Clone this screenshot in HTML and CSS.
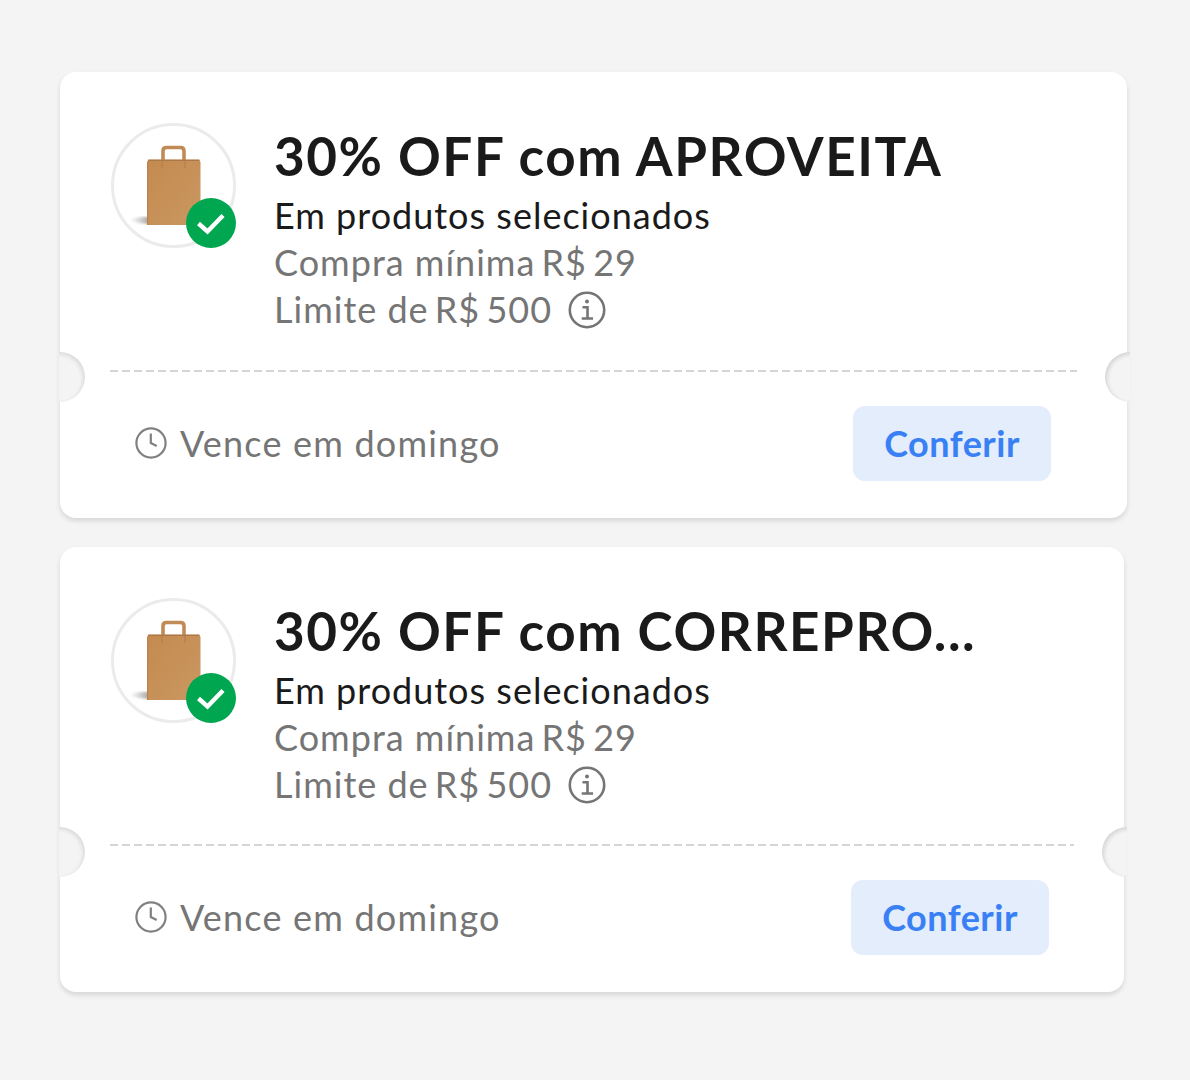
FILE: index.html
```
<!DOCTYPE html>
<html lang="pt-BR">
<head>
  <meta charset="UTF-8">
  <meta name="viewport" content="width=device-width, initial-scale=1.0">
  <title>Cupons</title>
  <link rel="stylesheet" href="styles.css">
</head>
<body>
  <svg class="sprite" aria-hidden="true">
    <defs>
      <linearGradient id="kraft" x1="0" y1="0" x2="1" y2="1">
        <stop offset="0" stop-color="#c48a50"/>
        <stop offset="1" stop-color="#c99861"/>
      </linearGradient>
      <linearGradient id="sombra" x1="0" y1="0" x2="1" y2="0">
        <stop offset="0" stop-color="#888" stop-opacity="0"/>
        <stop offset="1" stop-color="#665f57" stop-opacity="0.6"/>
      </linearGradient>
      <filter id="suave"><feGaussianBlur stdDeviation="1.2"/></filter>
    </defs>
    <symbol id="sacola" viewBox="0 0 119 119">
      <path d="M15 94 Q25 90 36 91 V98 Q24 98 15 94Z" fill="url(#sombra)" filter="url(#suave)"/>
      <path d="M49 43V25Q49 21.500 52.500 21.500H66.500Q70 21.500 70 25V43" fill="none" stroke="#c18b57" stroke-width="3.600"/>
      <path d="M33 36 34.500 33.500H85L86.500 36V99H33Z" fill="url(#kraft)"/>
      <path d="M34 34.300H85.500" stroke="#ab7947" stroke-width="1.200"/>
      <path d="M48 35V42M71 35V42" stroke="#bb834c" stroke-width="1.500"/>
      <path d="M33.600 37V99" stroke="#b9834f" stroke-width="1.200"/>
    </symbol>
    <symbol id="check" viewBox="0 0 50 50">
      <circle cx="25" cy="25" r="25" fill="#00a650"/>
      <path d="M12.500 25.500 21.500 33.500 37 17.500" fill="none" stroke="#fff" stroke-width="4.400"/>
    </symbol>
    <symbol id="info" viewBox="0 0 38 38">
      <circle cx="19" cy="19" r="17.200" fill="none" stroke="#757575" stroke-width="2.600"/>
      <circle cx="19" cy="10.500" r="2" fill="#757575"/>
      <path d="M14.500 16.300H19.500V27.200M13.700 27.500H25" fill="none" stroke="#757575" stroke-width="2.600"/>
    </symbol>
    <symbol id="relogio" viewBox="0 0 32 32">
      <circle cx="16" cy="16" r="14.600" fill="none" stroke="#808080" stroke-width="2.200"/>
      <path d="M15.800 6.500V16L21.700 19" fill="none" stroke="#808080" stroke-width="2.200"/>
    </symbol>
  </svg>

  <main class="cupons">
    <article class="cupom">
      <div class="topo">
        <div class="foto">
          <svg class="sacola"><use href="#sacola"/></svg>
          <svg class="check"><use href="#check"/></svg>
        </div>
        <div class="texto">
          <h2 class="titulo">30% OFF com APROVEITA</h2>
          <p class="sub">Em produtos selecionados</p>
          <p class="minimo">Compra mínima<span class="valor"> R$ 29</span></p>
          <p class="limite"><span>Limite de<span class="valor"> R$ 500</span></span><svg class="info"><use href="#info"/></svg></p>
        </div>
      </div>
      <div class="divisor"></div>
      <div class="rodape">
        <div class="prazo"><svg class="relogio"><use href="#relogio"/></svg><span>Vence em domingo</span></div>
        <button class="botao">Conferir</button>
      </div>
    </article>

    <article class="cupom cupom-longo">
      <div class="topo">
        <div class="foto">
          <svg class="sacola"><use href="#sacola"/></svg>
          <svg class="check"><use href="#check"/></svg>
        </div>
        <div class="texto">
          <h2 class="titulo">30% OFF com CORREPRO...</h2>
          <p class="sub">Em produtos selecionados</p>
          <p class="minimo">Compra mínima<span class="valor"> R$ 29</span></p>
          <p class="limite"><span>Limite de<span class="valor"> R$ 500</span></span><svg class="info"><use href="#info"/></svg></p>
        </div>
      </div>
      <div class="divisor"></div>
      <div class="rodape">
        <div class="prazo"><svg class="relogio"><use href="#relogio"/></svg><span>Vence em domingo</span></div>
        <button class="botao">Conferir</button>
      </div>
    </article>
  </main>
</body>
</html>
```
FILE: styles.css
```
* {
    box-sizing: border-box;
}
body {
    margin: 0;
    background-color: #f4f4f4;
    font-family: Lato, "Open Sans", sans-serif;
}
h2, p {
    margin: 0;
    white-space: nowrap;
}
.sprite {
    position: absolute;
    width: 0;
    height: 0;
}
.cupons {
    display: flex;
    flex-direction: column;
    gap: 29px;
    padding: 72px 60px;
}
.cupom {
    position: relative;
    width: 1067px;
    height: 446px;
    background-color: #fff;
    border-radius: 16px;
    box-shadow: 0 3px 5px rgba(0, 0, 0, 0.12);
}
.cupom-longo {
    width: 1064px;
    height: 445px;
}

/* recortes laterais do cupom */
.cupom::before, .cupom::after {
    content: "";
    position: absolute;
    top: 280px;
    width: 50px;
    height: 50px;
    border-radius: 50%;
    background-color: #f4f4f4;
}
.cupom::before {
    left: -25px;
    box-shadow: inset -2px 2px 4px rgba(0, 0, 0, 0.1);
    clip-path: inset(0 0 0 24px);
}
.cupom::after {
    right: -28px;
    box-shadow: inset 2px 2px 4px rgba(0, 0, 0, 0.13);
    clip-path: inset(0 25px 0 0);
}

.topo {
    display: flex;
    gap: 38px;
    height: 298px;
    padding: 51px 50px 0 51px;
}
.foto {
    position: relative;
    width: 125px;
    height: 125px;
    border: 3px solid #ebebeb;
    border-radius: 50%;
}
.sacola {
    display: block;
    width: 119px;
    height: 119px;
}
.check {
    position: absolute;
    right: -3px;
    bottom: -3px;
    width: 50px;
    height: 50px;
}
.titulo {
    padding-top: 3px;
    font-size: 53px;
    line-height: 60px;
    font-weight: 700;
    letter-spacing: 1.55px;
    color: #1a1a1a;
}
.sub, .minimo, .limite, .prazo {
    font-size: 36px;
    line-height: 47px;
    letter-spacing: 1px;
    color: #757575;
}
.sub {
    padding-top: 6px;
    color: #1a1a1a;
}
.valor {
    word-spacing: -4px;
}
.limite {
    display: flex;
    align-items: center;
    gap: 16px;
}
.info {
    width: 38px;
    height: 38px;
}
.divisor {
    height: 2px;
    margin: 0 50px;
    background: repeating-linear-gradient(to right, #d5d5d5 0 8px, transparent 8px 12px);
}
.rodape {
    display: flex;
    justify-content: space-between;
    align-items: center;
    padding: 34px 76px 0 75px;
}
.cupom-longo .topo {
    height: 297px;
}
.cupom-longo .rodape {
    padding-right: 75px;
}
.prazo {
    display: flex;
    align-items: center;
    gap: 13px;
    letter-spacing: 1.2px;
}
.relogio {
    width: 32px;
    height: 32px;
    margin-bottom: 2px;
}
.botao {
    width: 198px;
    height: 75px;
    padding: 0 0 2px;
    border: 0;
    border-radius: 12px;
    background-color: #e3edfb;
    color: #3a80f5;
    font-family: inherit;
    font-size: 36px;
    font-weight: 700;
    letter-spacing: 0.5px;
}
```
